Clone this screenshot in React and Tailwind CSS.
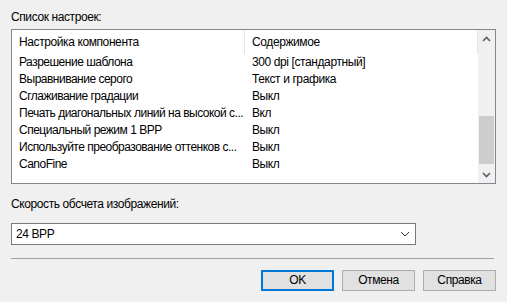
const ROWS = [
  ["Разрешение шаблона", "300 dpi [стандартный]"],
  ["Выравнивание серого", "Текст и графика"],
  ["Сглаживание градации", "Выкл"],
  ["Печать диагональных линий на высокой с...", "Вкл"],
  ["Специальный режим 1 BPP", "Выкл"],
  ["Используйте преобразование оттенков с...", "Выкл"],
  ["CanoFine", "Выкл"],
];

/* ─── SCROLL ARROWS ───────────────────────────────────────────── */
const Arrow = ({ up }) => (
  <svg width="9" height="6" viewBox="0 0 9 6" className="block">
    <path d={up ? "M1 5 L4.5 1.5 L8 5" : "M1 1 L4.5 4.5 L8 1"} fill="none" stroke="#606060" strokeWidth="1.6" />
  </svg>
);

const Btn = ({ children, primary }) => (
  <button
    className={
      "w-[73px] h-[21px] flex items-center justify-center bg-[#e1e1e1] text-[12px] text-black " +
      (primary ? "border-2 border-[#0078d7]" : "border border-[#adadad]")
    }
  >
    {children}
  </button>
);

export default function App() {
  return (
    <div
      className="w-[507px] h-[302px] bg-[#f0f0f0] text-black text-[12px] leading-[15px] tracking-[-0.4px] pl-[11px] pr-[11px] flex flex-col"
      style={{ fontFamily: '"Liberation Sans", Arial, sans-serif' }}
    >
      <div className="mt-[10px] h-[15px]">Список настроек:</div>

      {/* list view */}
      <div className="mt-[4px] w-[485px] h-[155px] border border-[#828790] bg-white flex">
        <div className="flex-1 flex flex-col">
          <div className="h-[24px] flex items-center">
            <div className="w-[233px] pl-[7px] h-full flex items-center border-r border-[#e5e5e5]">
              Настройка компонента
            </div>
            <div className="w-[233px] pl-[7px] h-full flex items-center border-r border-[#e5e5e5]">
              Содержимое
            </div>
          </div>
          {ROWS.map(([k, v]) => (
            <div key={k} className="h-[17px] flex items-center whitespace-nowrap">
              <div className="w-[233px] shrink-0 pl-[7px] tracking-[-0.5px]">{k}</div>
              <div className="pl-[7px]">{v}</div>
            </div>
          ))}
        </div>
        <div className="w-[17px] bg-[#f0f0f0] flex flex-col items-center">
          <div className="h-[17px] flex items-center justify-center"><Arrow up /></div>
          <div className="flex-1 w-full flex flex-col">
            <div className="h-[69px]" />
            <div className="h-[48px] mx-[1px] bg-[#cdcdcd]" />
          </div>
          <div className="h-[17px] flex items-center justify-center"><Arrow /></div>
        </div>
      </div>

      <div className="mt-[13px] h-[15px]">Скорость обсчета изображений:</div>

      {/* combo box */}
      <div className="mt-[11px] w-[405px] h-[22px] border border-[#7a7a7a] bg-white flex items-center justify-between pl-[4px] pr-[4px]">
        <span>24 BPP</span>
        <svg width="10" height="6" viewBox="0 0 10 6" className="mr-[1px]">
          <path d="M1 1 L5 5 L9 1" fill="none" stroke="#333" strokeWidth="1" />
        </svg>
      </div>

      <div className="mt-[13px] w-[483px] h-px bg-[#a0a0a0]" />

      <div className="mt-[11px] flex justify-end gap-[8px] mr-[0px]">
        <Btn primary>OK</Btn>
        <Btn>Отмена</Btn>
        <Btn>Справка</Btn>
      </div>
    </div>
  );
}
